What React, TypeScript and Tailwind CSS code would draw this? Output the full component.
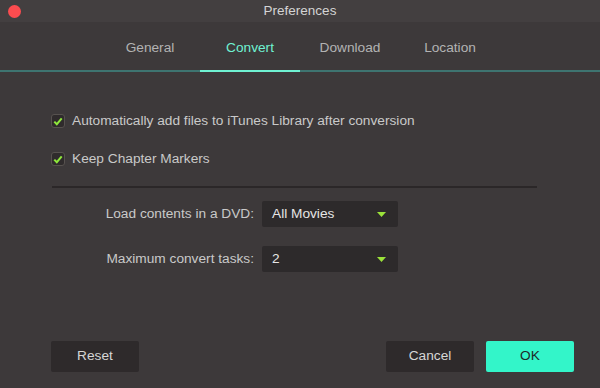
const tabs = ['General', 'Convert', 'Download', 'Location']

function Check({ label }: { label: string }) {
  return (
    <label className="flex items-center gap-[7px] h-[14px]">
      <span className="w-[14px] h-[14px] rounded-[3px] border border-[#57524f] bg-[#2f2b2c] flex items-center justify-center">
        <svg width="10" height="9" viewBox="0 0 10 9">
          <path d="M1.3 4.6 L3.8 7.2 L8.7 1.4" stroke="#8fe83c" strokeWidth="2" fill="none" />
        </svg>
      </span>
      <span className="text-[13.7px] text-[#c9c9c9]">{label}</span>
    </label>
  )
}

function SelectRow({ label, value }: { label: string; value: string }) {
  return (
    <div className="flex items-center">
      <span className="w-[203px] text-right text-[13.7px] text-[#c9c9c9]">{label}</span>
      <div className="ml-[8px] w-[136px] h-[26px] rounded-[2px] bg-[#2d2a2b] flex items-center pl-[10px] pr-[12px]">
        <span className="flex-1 text-[13.7px] text-[#e6e6e6]">{value}</span>
        <svg width="9" height="5" viewBox="0 0 9 5">
          <path d="M0 0 H9 L4.5 5 Z" fill="#9be23a" />
        </svg>
      </div>
    </div>
  )
}

export default function App() {
  return (
    <div className="w-[600px] h-[388px] flex flex-col bg-[#3d393a] overflow-hidden" style={{ fontFamily: '"Liberation Sans", Arial, sans-serif' }}>
      {/* Title bar */}
      <div className="h-[22px] bg-[#433f40] relative flex items-center justify-center">
        <span className="absolute left-[8px] top-[5px] w-[13px] h-[13px] rounded-full bg-[#fc4c4f]" />
        <span className="text-[13.5px] text-[#d4d4d4]">Preferences</span>
      </div>

      {/* Tabs */}
      <div className="h-[50px] border-b-2 border-[#3e7470] flex pl-[100px]">
        {tabs.map((t) => (
          <div
            key={t}
            className={`w-[100px] pt-[4px] flex items-center justify-center text-[13.7px] -mb-[2px] border-b-2 ${
              t === 'Convert' ? 'text-[#6ff2d2] border-[#6ff2d2]' : 'text-[#b3b3b3] border-transparent'
            }`}
          >
            {t}
          </div>
        ))}
      </div>

      {/* Body */}
      <div className="flex-1 flex flex-col pl-[51px] pr-[26px]">
        <div className="mt-[42px]">
          <Check label="Automatically add files to iTunes Library after conversion" />
        </div>
        <div className="mt-[24px]">
          <Check label="Keep Chapter Markers" />
        </div>
        <div className="mt-[20px] ml-[1px] w-[485px] h-[2px] bg-[#2b2728]" />
        <div className="mt-[13px] flex flex-col gap-[19px]">
          <SelectRow label="Load contents in a DVD:" value="All Movies" />
          <SelectRow label="Maximum convert tasks:" value="2" />
        </div>

        <div className="mt-auto mb-[16px] flex items-center">
          <button className="w-[88px] h-[31px] rounded-[2px] bg-[#2e2a2b] text-[13.7px] text-[#d6d6d6]">Reset</button>
          <div className="flex-1" />
          <button className="w-[88px] h-[31px] rounded-[2px] bg-[#2e2a2b] text-[13.7px] text-[#d6d6d6]">Cancel</button>
          <button className="ml-[12px] w-[88px] h-[31px] rounded-[2px] bg-[#33f5c9] text-[13.7px] text-[#1e2b27]">OK</button>
        </div>
      </div>
    </div>
  )
}
